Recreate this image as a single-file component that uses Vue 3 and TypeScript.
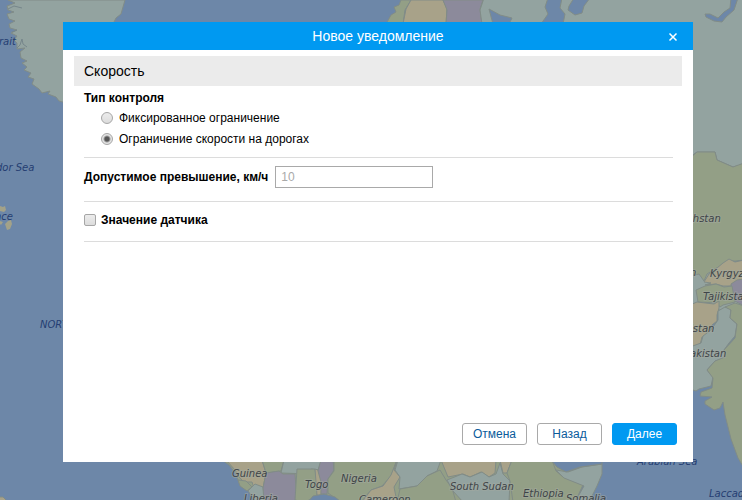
<script setup lang="ts">
import { ref } from 'vue'

type ControlType = 'fixed' | 'road'

interface Region {
  tone: 'teal' | 'green' | 'tan' | 'purple' | 'sea'
  d: string
}

interface MapLabel {
  text: string
  x: number
  y: number
  water?: boolean
}

const controlType = ref<ControlType>('road')
const excess = ref('')
const useSensor = ref(false)

const controlOptions: { value: ControlType; label: string }[] = [
  { value: 'fixed', label: 'Фиксированное ограничение' },
  { value: 'road', label: 'Ограничение скорости на дорогах' },
]

const regions: Region[] = [
  // Greenland
  { tone: 'teal', d: 'M8 0L15 3 7 6 8 10 14 12 7 14 9 19 15 21 9 24 10 28 17 30 11 33 17 36 14 40 17 43 17 49 25 48 20 52 21 58 27 61 22 63 27 67 24 70 31 73 28 77 34 79 32 84 39 89 42 93 50 91 48 94 56 97 59 101 66 103V24H113L116 18 121 14 125 0Z' },
  // Scandinavia and the north
  { tone: 'green', d: 'M386 24L391 15 396 12 394 7 399 5 401 0H411L405 10 403 24Z' },
  { tone: 'tan', d: 'M403 24L406 9 411 0H443L447 9 446 24Z' },
  { tone: 'purple', d: 'M446 24L447 10 443 0H483L480 9 482 24Z' },
  { tone: 'teal', d: 'M482 24L480 10 484 -2H744V164L733 167 717 160 715 152 697 152 690 157V24Z' },
  { tone: 'sea', d: 'M489 9L500 15 512 18 509 24H493ZM541 24L548 14 545 7 548 -2H562L560 8 565 14 563 24ZM569 6L574 -2H590L584 6 582 13 575 15 568 10ZM706 17L705 14 710 14 718 18 724 12 730 8 731 -2H738L734 10 726 17 722 22 714 21Z' },
  // Central Asia
  { tone: 'teal', d: 'M690 270H744V310H690Z' },
  { tone: 'green', d: 'M690 158L697 152 715 152 717 160 733 167 744 163V260L736 261 728 261 722 265 715 269 707 274 704 281 699 274 690 276Z' },
  { tone: 'tan', d: 'M704 282L709 274 717 268 723 263 729 259 735 262 744 260V281L735 286 723 286 716 284 705 285 711 283Z' },
  { tone: 'purple', d: 'M731 284L737 280 744 279V306L733 300Z' },
  { tone: 'green', d: 'M696 290L705 286 716 284 724 287 732 286 735 302 723 305 720 307 717 303 698 302Z' },
  { tone: 'tan', d: 'M690 305L697 302 714 304 719 301 719 308 717 315 717 321 712 325 709 334 702 337 700 345 690 347Z' },
  { tone: 'teal', d: 'M690 347L701 343 703 336 711 330 718 320 718 311 725 307 731 309 730 318 737 324 735 336 729 343 724 350 725 358 715 361 707 370 713 377 711 386 699 389 696 391 690 389Z' },
  { tone: 'green', d: 'M725 307L735 303 744 306V468L738 458 731 439 725 415 723 402 720 408 714 410 705 404 705 401 712 397 700 396 701 392 712 388 713 378 707 370 715 361 725 357 724 350 735 338 737 324 730 318 731 310Z' },
  // West and central Africa
  { tone: 'green', d: 'M222 460L229 465 236 474 239 483 244 489 250 487 258 493 271 502H308L326 495 333 499 570 502V460Z' },
  { tone: 'tan', d: 'M226 460H262L266 473 263 488 254 488 252 482 244 482 239 477 235 470Z' },
  { tone: 'green', d: 'M262 460H284L281 471 266 473ZM238 480L246 481 252 487 247 491 240 486Z' },
  { tone: 'teal', d: 'M284 460H322L318 470 311 469 309 474 281 473ZM248 491L255 484 263 487 265 502H256Z' },
  { tone: 'purple', d: 'M266 473L279 471 283 474H295L297 502H264L263 488Z' },
  { tone: 'green', d: 'M297 469H315L317 482 317 496 305 502 295 500Z' },
  { tone: 'tan', d: 'M315 469L318 470 322 482 321 496 317 495Z' },
  { tone: 'purple', d: 'M320 463L322 460H333L334 470 328 479 327 494 321 494 321 482 318 471Z' },
  { tone: 'green', d: 'M334 460H397L391 476 382 486 371 490 361 502H341L328 493 328 479 334 471Z' },
  { tone: 'tan', d: 'M397 460L394 470 400 477 394 487 397 502H362L371 490 383 486 391 475Z' },
  { tone: 'teal', d: 'M398 460H441L437 471 427 476 417 486 399 489 400 477 395 470Z' },
  { tone: 'green', d: 'M400 489L417 486 427 476 440 470 446 480 452 488 456 502H397Z' },
  { tone: 'tan', d: 'M441 460H496L495 473 489 477 481 472 470 477 463 474 448 477Z' },
  { tone: 'teal', d: 'M447 480L462 474 470 477 482 472 489 477 496 474 500 463 503 474 510 481 509 502H463L453 491Z' },
  { tone: 'tan', d: 'M500 460H512L507 473 503 473Z' },
  { tone: 'green', d: 'M512 460H552L556 471 563 477 583 485 575 502H513L510 481 507 473Z' },
  { tone: 'teal', d: 'M556 470L568 472 582 467 602 464 602 474 597 486 589 502H575L584 486 564 478Z' },
  { tone: 'sea', d: 'M551 460H602V464L580 467 566 472 557 467ZM308 502L313 496 324 494 335 497 341 502Z' },
  { tone: 'tan', d: 'M-2 497L3 497 8 502H-2Z' },
]

const labels: MapLabel[] = [
  { text: 'rait', x: -1, y: 45, water: true },
  { text: 'dor Sea', x: -4, y: 171, water: true },
  { text: 'nce', x: -5, y: 220, water: true },
  { text: 'NORTH', x: 40, y: 328, water: true },
  { text: 'Arabian Sea', x: 637, y: 465, water: true },
  { text: 'Laccadive', x: 709, y: 497, water: true },
  { text: 'Guinea', x: 232, y: 477 },
  { text: 'Liberia', x: 244, y: 502 },
  { text: 'Togo', x: 305, y: 488 },
  { text: 'Nigeria', x: 341, y: 482 },
  { text: 'Cameroon', x: 359, y: 503 },
  { text: 'South Sudan', x: 450, y: 490 },
  { text: 'Ethiopia', x: 523, y: 497 },
  { text: 'Somalia', x: 566, y: 502 },
  { text: 'khstan', x: 687, y: 222 },
  { text: 'n', x: 690, y: 276 },
  { text: 'Kyrgyzstan', x: 710, y: 277 },
  { text: 'Tajikistan', x: 703, y: 300 },
  { text: 'istan', x: 690, y: 332 },
  { text: 'akistan', x: 690, y: 357 },
]
</script>

<template>
  <main class="page">
    <svg class="map" viewBox="0 0 742 500" preserveAspectRatio="xMidYMid slice" aria-hidden="true">
      <path v-for="(r, i) in regions" :key="i" :class="['region', r.tone]" :d="r.d" />
      <path class="isles" d="M0 206l3 1 2-1 1 4-2 2-4-1zM5 224l3-3 3-1 1 4-2 5-3 1zM0 221l3 1-2 3-1-1z" />
      <path class="coast" d="M27 47l-4-3-1-5-2 6-3 3M8 9l6-3 8 2M17 30l-5 2" />
      <text
        v-for="(l, i) in labels"
        :key="i"
        :class="['place', { water: l.water }]"
        :x="l.x"
        :y="l.y"
      >{{ l.text }}</text>
    </svg>

    <section class="dialog" role="dialog" aria-labelledby="dialog-title">
      <header class="bar">
        <h1 id="dialog-title" class="title">Новое уведомление</h1>
        <button class="close" type="button" aria-label="Закрыть">
          <svg class="cross" viewBox="0 0 10 10"><path d="M1.5 1.5l7 7M8.5 1.5l-7 7" /></svg>
        </button>
      </header>

      <form class="content" @submit.prevent>
        <h2 class="section">Скорость</h2>

        <div class="fields">
          <fieldset class="group">
            <legend class="caption">Тип контроля</legend>
            <label v-for="o in controlOptions" :key="o.value" class="option">
              <input v-model="controlType" class="radio" type="radio" name="control" :value="o.value" />
              <span>{{ o.label }}</span>
            </label>
          </fieldset>

          <div class="row limit">
            <label class="caption" for="excess">Допустимое превышение, км/ч</label>
            <input id="excess" v-model="excess" class="number" type="text" placeholder="10" />
          </div>

          <label class="row sensor">
            <input v-model="useSensor" class="check" type="checkbox" />
            <span class="caption">Значение датчика</span>
          </label>
        </div>

        <footer class="actions">
          <button class="button" type="button">Отмена</button>
          <button class="button" type="button">Назад</button>
          <button class="button primary" type="submit">Далее</button>
        </footer>
      </form>
    </section>
  </main>
</template>

<style>
body {
  margin: 0;
}
</style>

<style scoped>
.page {
  position: relative;
  display: flex;
  box-sizing: border-box;
  min-height: 100vh;
  padding: 22px 49px 38px 63px;
  overflow: hidden;
  background: #6d87a8;
  color: #000;
  font-family: "Liberation Sans", Arial, sans-serif;
  font-size: 12px;
  line-height: 16px;
}

.map {
  position: absolute;
  inset: 0;
  width: 100%;
  height: 100%;
}

.region {
  stroke: #818c87;
  stroke-width: 1;
  stroke-linejoin: round;
}

.teal { fill: #93a3a0; }
.green { fill: #939f86; }
.tan { fill: #a8a289; }
.purple { fill: #8c8a9b; }
.sea { fill: #6d87a8; }

.isles {
  fill: #a3a289;
}

.coast {
  fill: none;
  stroke: #76868b;
}

.place {
  fill: #3f4448;
  stroke: #a3aaa0;
  stroke-opacity: 0.5;
  stroke-width: 2;
  paint-order: stroke;
  font-family: "DejaVu Sans", sans-serif;
  font-size: 10px;
  font-style: italic;
}

.place.water {
  fill: #253e72;
  stroke: none;
}

.dialog {
  position: relative;
  display: flex;
  flex: 1;
  flex-direction: column;
  min-width: 0;
  background: #fff;
}

.bar {
  display: grid;
  grid-template-columns: 28px 1fr 28px;
  align-items: center;
  height: 28px;
  padding: 0 6px;
  background: #0099f1;
  color: #fff;
}

.title {
  grid-column: 2;
  margin: 0;
  font-size: 14px;
  font-weight: 400;
  text-align: center;
}

.close {
  display: flex;
  align-items: center;
  justify-content: center;
  height: 28px;
  padding: 2px 0 0;
  border: 0;
  background: none;
}

.cross {
  width: 10px;
  height: 10px;
  fill: none;
  stroke: #fff;
  stroke-width: 1.5;
}

.content {
  display: flex;
  flex: 1;
  flex-direction: column;
  padding: 6px 11px 17px;
}

.section {
  margin: 0;
  padding: 7px 10px;
  background: #ebebeb;
  font-size: 14px;
  font-weight: 400;
}

.fields {
  display: flex;
  flex-direction: column;
  padding: 4px 9px 0 10px;
}

.group {
  min-width: 0;
  margin: 0;
  padding: 1px 0 8px;
  border: 0;
  border-bottom: 1px solid #dcdcdc;
}

.caption {
  padding: 0;
  font-weight: 700;
}

.option {
  display: flex;
  align-items: center;
  gap: 6px;
  height: 21px;
  padding-left: 17px;
}

.row {
  display: flex;
  align-items: center;
  border-bottom: 1px solid #dcdcdc;
}

.limit {
  gap: 7px;
  padding: 8px 0 13px;
}

.sensor {
  gap: 5px;
  padding: 10px 0 13px;
}

.radio,
.check {
  flex: none;
  box-sizing: border-box;
  width: 12px;
  height: 12px;
  margin: 0;
  border: 1px solid #a6a6a6;
  background: linear-gradient(#ececec, #dcdcdc);
  appearance: none;
}

.radio {
  border-radius: 50%;
}

.radio:checked {
  background: radial-gradient(circle, #555 0 2px, #e4e4e4 4px);
}

.check {
  border-radius: 2px;
}

.number {
  box-sizing: border-box;
  width: 158px;
  height: 22px;
  padding: 0 5px;
  border: 1px solid #a9a9a9;
  background: #fff;
  color: #000;
  font: inherit;
}

.number::placeholder {
  color: #a9a9a9;
  opacity: 1;
}

.actions {
  display: flex;
  justify-content: flex-end;
  gap: 10px;
  margin-top: auto;
  padding-right: 5px;
}

.button {
  box-sizing: border-box;
  width: 65px;
  height: 22px;
  padding: 0;
  border: 1px solid #a9a9a9;
  border-radius: 3px;
  background: #fff;
  color: #0b5b9b;
  font: inherit;
}

.primary {
  border-color: #0099f1;
  background: #0099f1;
  color: #fff;
}
</style>
